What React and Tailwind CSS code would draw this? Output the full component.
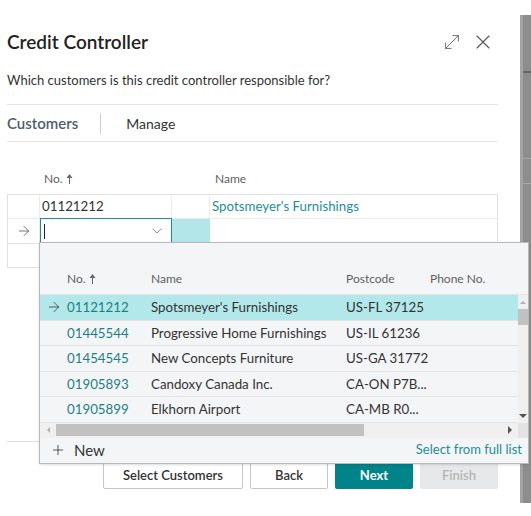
import { X, MoveDiagonal, ArrowRight, ChevronDown, Plus } from "lucide-react";

const SortUp = () => (
  <svg width="7" height="11" viewBox="0 0 7 11" className="inline-block ml-[3px] -mt-[2px]">
    <path d="M3.5 1 L6.5 5 L0.5 5 Z" fill="#666" />
    <rect x="3" y="4" width="1" height="7" fill="#666" />
  </svg>
);

const rows = [
  { no: "01121212", name: "Spotsmeyer's Furnishings", post: "US-FL 37125", active: true },
  { no: "01445544", name: "Progressive Home Furnishings", post: "US-IL 61236" },
  { no: "01454545", name: "New Concepts Furniture", post: "US-GA 31772" },
  { no: "01905893", name: "Candoxy Canada Inc.", post: "CA-ON P7B..." },
  { no: "01905899", name: "Elkhorn Airport", post: "CA-MB R0..." },
];

const Lookup = () => (
  <div className="absolute left-[39px] top-[242px] w-[490px] bg-[#f4f5f7] border border-[#b9b9b9] shadow-sm flex flex-col text-[#333]">
    {/* header */}
    <div className="h-[52px] flex items-end pb-[7px] text-[12px] leading-[16px] text-[#5f5f5f] border-b border-[#e3e3e3]">
      <div className="w-[27px]" />
      <div className="w-[84px]">No.<SortUp /></div>
      <div className="w-[195px]">Name</div>
      <div className="w-[84px]">Postcode</div>
      <div>Phone No.</div>
    </div>

    <div className="flex">
      <div className="flex-1 flex flex-col">
        {rows.map((r) => (
          <div
            key={r.no}
            className={
              "h-[25.5px] flex items-center pt-[2px] text-[13.3px] border-b border-[#e3e3e3] " +
              (r.active ? "bg-[#b3e8ea]" : "")
            }
          >
            <div className="w-[27px] pl-[6px] -mt-[2px]">
              {r.active && <ArrowRight size={16} strokeWidth={1.3} color="#444" />}
            </div>
            <div className="w-[84px] text-[#1d7f82]">{r.no}</div>
            <div className="w-[195px] whitespace-nowrap">{r.name}</div>
            <div>{r.post}</div>
          </div>
        ))}
        {/* horizontal scrollbar */}
        <div className="h-[15px] flex items-center bg-[#f0f0f0]">
          <div className="w-[16px] flex justify-center">
            <div className="w-0 h-0 border-y-[3px] border-y-transparent border-r-[3px] border-r-[#b0b0b0]" />
          </div>
          <div className="w-[308px] h-[12px] bg-[#c1c1c1]" />
          <div className="flex-1" />
          <div className="w-[16px] flex justify-center">
            <div className="w-0 h-0 border-y-[4px] border-y-transparent border-l-[4px] border-l-[#555]" />
          </div>
        </div>
      </div>
      {/* vertical scrollbar */}
      <div className="w-[10px] flex flex-col bg-[#f0f0f0]">
        <div className="h-[14px] flex items-center justify-center">
          <div className="w-0 h-0 border-x-[3px] border-x-transparent border-b-[3px] border-b-[#b0b0b0]" />
        </div>
        <div className="h-[16px] bg-[#c1c1c1]" />
        <div className="flex-1" />
        <div className="h-[14px] flex items-center justify-center">
          <div className="w-0 h-0 border-x-[4px] border-x-transparent border-t-[4px] border-t-[#555]" />
        </div>
        <div className="h-[15px] bg-[#e3e3e3]" />
      </div>
    </div>

    {/* footer */}
    <div className="h-[25px] flex items-center justify-between pl-[10px] pr-[6px]">
      <div className="flex items-center gap-[8px] text-[15px] text-[#333]">
        <Plus size={16} strokeWidth={1.2} color="#333" />
        New
      </div>
      <div className="text-[13px] text-[#1d8f93]">Select from full list</div>
    </div>
  </div>
);

export default function App() {
  return (
    <div className="relative w-[531px] h-[516px] bg-white flex font-['Lato',sans-serif] text-[#262626]">
      <div className="w-[520px] flex flex-col pl-[7px] pr-[22px]">
        {/* title */}
        <div className="pt-[29px] flex items-center justify-between">
          <h1 className="text-[19px] leading-[26px] font-semibold text-[#222]">Credit Controller</h1>
          <div className="flex items-center gap-[8px] pr-[3px]">
            <MoveDiagonal size={22} strokeWidth={1} color="#666" />
            <X size={24} strokeWidth={1.1} color="#555" />
          </div>
        </div>
        <p className="mt-[15px] text-[13px] leading-[20px] text-[#333]">
          Which customers is this credit controller responsible for?
        </p>

        {/* tabs */}
        <div className="mt-[14px] h-[38px] border-y border-[#e6e6e6] flex items-center">
          <span className="text-[15px] font-semibold text-[#4f5c6e]">Customers</span>
          <span className="ml-[22px] h-[21px] border-l border-[#cfcfcf]" />
          <span className="ml-[25px] text-[14px] text-[#333]">Manage</span>
        </div>

        {/* grid */}
        <div className="h-[52px] flex items-end pb-[7px] text-[12px] leading-[16px] text-[#5f5f5f]">
          <div className="w-[37px]" />
          <div className="w-[171px]">No.<SortUp /></div>
          <div>Name</div>
        </div>
        <div className="h-[248px] border-b border-[#dcdcdc]">
          <div className="border border-[#e1e1e1] text-[13.3px]">
            <div className="grid grid-cols-[32px_132px_38px_1fr] h-[24px] border-b border-[#ececec]">
              <div className="border-r border-[#ececec]" />
              <div className="border-r border-[#ececec] pl-[2px] leading-[23px] text-[#333]">01121212</div>
              <div className="border-r border-[#ececec]" />
              <div className="pl-[2px] leading-[23px] text-[#1d8f93]">Spotsmeyer's Furnishings</div>
            </div>
            <div className="grid grid-cols-[32px_132px_38px_1fr] h-[24px]">
              <div className="border-r border-[#ececec] flex items-center justify-center">
                <ArrowRight size={16} strokeWidth={1.2} color="#555" />
              </div>
              <div className="border border-[#1a8f94] -my-px flex items-center justify-between pl-[3px] pr-[6px] bg-white">
                <span className="w-px h-[15px] bg-[#222]" />
                <ChevronDown size={16} strokeWidth={1.1} color="#666" />
              </div>
              <div className="bg-[#b2e6e9]" />
              <div />
            </div>
          </div>
          <div className="w-[33px] h-[24px] border-x border-b border-[#e1e1e1]" />
        </div>

        {/* buttons */}
        <div className="mt-[20px] flex justify-end gap-[7px] text-[13px] font-semibold">
          <button className="w-[140px] h-[27px] border border-[#c6c6c6] rounded-[2px] text-[#333]">Select Customers</button>
          <button className="w-[78px] h-[27px] border border-[#c6c6c6] rounded-[2px] text-[#333]">Back</button>
          <button className="w-[78px] h-[27px] rounded-[2px] bg-[#008489] text-white font-bold">Next</button>
          <button className="w-[78px] h-[27px] rounded-[2px] bg-[#e7e8ea] text-[#b4b4b4]">Finish</button>
        </div>
      </div>

      {/* page behind the dialog */}
      <div className="w-[11px] mt-[15px] h-[488px] flex flex-col bg-[#8d8d8d] border-l-[3px] border-[#a3a3a3]">
        <div className="h-[56px]" />
        <div className="h-[2px] bg-[#666]" />
        <div className="h-[85px]" />
        <div className="h-px bg-[#a9a9a9]" />
        <div className="h-[24px]" />
        <div className="h-px bg-[#a9a9a9]" />
      </div>

      <Lookup />
    </div>
  );
}
